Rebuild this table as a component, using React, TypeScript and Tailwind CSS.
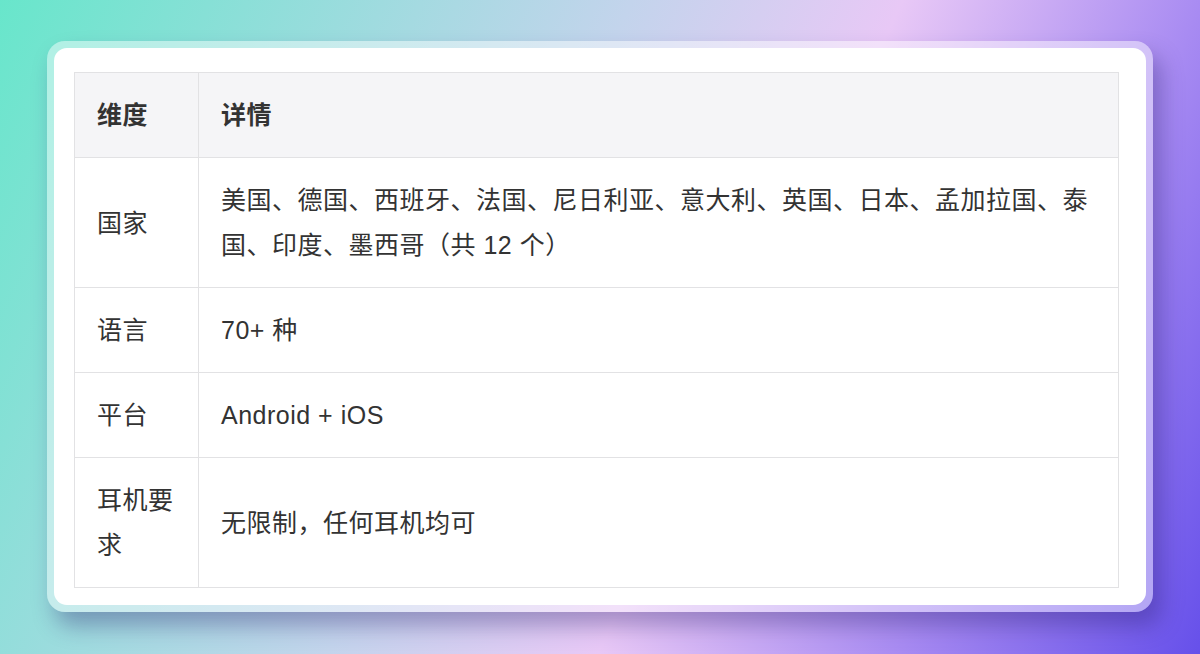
import React from 'react';

const rows = [
  { k: '国家', v: '美国、德国、西班牙、法国、尼日利亚、意大利、英国、日本、孟加拉国、泰国、印度、墨西哥（共 12 个）' },
  { k: '语言', v: '70+ 种' },
  { k: '平台', v: 'Android + iOS' },
  { k: '耳机要求', v: '无限制，任何耳机均可' },
];

export default function App() {
  return (
    <div
      className="w-[1200px] h-[654px] overflow-hidden bg-[linear-gradient(115deg,#68e6cb_0%,#c3d4ec_42%,#e8c8f6_60%,#a88bf2_80%,#6650ea_100%)] pt-[41px] pl-[47px]"
      style={{ fontFamily: '"Liberation Sans", "Noto Sans CJK SC", sans-serif' }}
    >
      <div className="w-[1106px] h-[571px] rounded-[18px] bg-white/45 p-[7px] shadow-[8px_14px_22px_rgba(40,30,110,0.35)]">
        <div className="w-full h-full rounded-[13px] bg-white pt-[24px] pl-[20px]">
          <table className="w-[1045px] table-fixed border-collapse text-[25px] leading-[45px] tracking-[0.5px] text-[#333]">
            <colgroup>
              <col className="w-[124px]" />
              <col />
            </colgroup>
            <thead>
              <tr className="bg-[#f5f5f7]">
                <th className="border border-[#e2e2e4] px-[22px] pt-[20px] pb-[19px] text-left font-bold">维度</th>
                <th className="border border-[#e2e2e4] px-[22px] pt-[20px] pb-[19px] text-left font-bold">详情</th>
              </tr>
            </thead>
            <tbody>
              {rows.map((r) => (
                <tr key={r.k}>
                  <td className="border border-[#e2e2e4] px-[22px] pt-[20px] pb-[19px] align-middle">{r.k}</td>
                  <td className="border border-[#e2e2e4] px-[22px] pt-[20px] pb-[19px] align-middle">{r.v}</td>
                </tr>
              ))}
            </tbody>
          </table>
        </div>
      </div>
    </div>
  );
}
